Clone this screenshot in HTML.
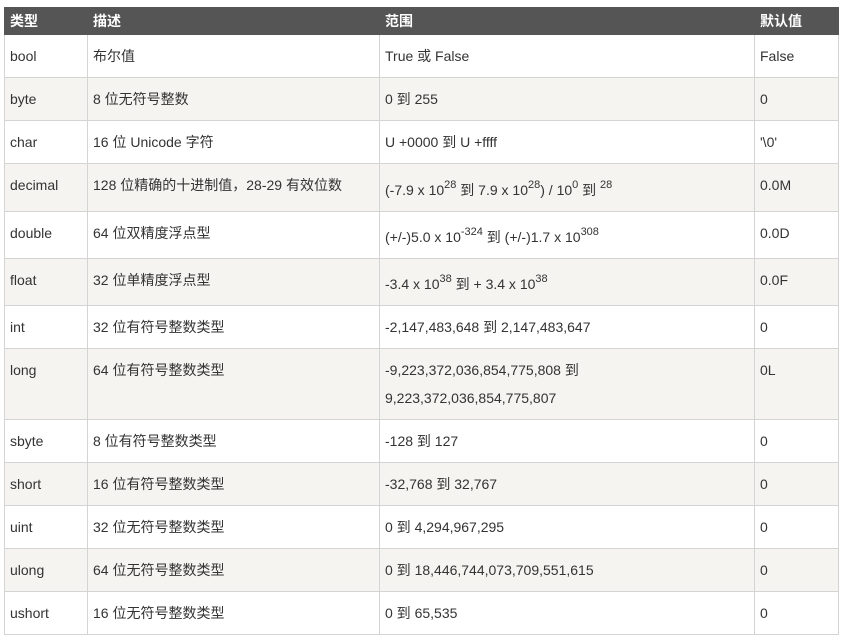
<!DOCTYPE html>
<html><head><meta charset="utf-8"><style>
body{margin:0;background:#fff;font-family:"Liberation Sans","Noto Sans CJK SC",sans-serif;font-size:14px;color:#333}
table{position:absolute;left:4px;top:7px;border-collapse:collapse;width:834px;table-layout:fixed}
th{background:#555;color:#fff;text-align:left;font-weight:bold;height:26px;padding:0 5px;line-height:26px;border:1px solid #555}
td{border:1px solid #d4d4d4;padding:7px 5px 0;vertical-align:top;line-height:28px}
tr:nth-child(odd) td{background:#f6f4f0}
sup{font-size:11px;line-height:0;vertical-align:7px}
</style></head><body>
<table>
<colgroup><col style="width:83px"><col style="width:292px"><col style="width:375px"><col style="width:84px"></colgroup>
<tr><th>类型</th><th>描述</th><th>范围</th><th>默认值</th></tr>
<tr style="height:43px"><td>bool</td><td>布尔值</td><td>True 或 False</td><td>False</td></tr>
<tr style="height:43px"><td>byte</td><td>8 位无符号整数</td><td>0 到 255</td><td>0</td></tr>
<tr style="height:43px"><td>char</td><td>16 位 Unicode 字符</td><td>U +0000 到 U +ffff</td><td>'\0'</td></tr>
<tr style="height:48px"><td>decimal</td><td>128 位精确的十进制值，28-29 有效位数</td><td style="padding-top:12px">(-7.9 x 10<sup>28</sup> 到 7.9 x 10<sup>28</sup>) / 10<sup>0</sup> 到 <sup>28</sup></td><td>0.0M</td></tr>
<tr style="height:47px"><td>double</td><td>64 位双精度浮点型</td><td style="padding-top:11px">(+/-)5.0 x 10<sup>-324</sup> 到 (+/-)1.7 x 10<sup>308</sup></td><td>0.0D</td></tr>
<tr style="height:47px"><td>float</td><td>32 位单精度浮点型</td><td style="padding-top:11px">-3.4 x 10<sup>38</sup> 到 + 3.4 x 10<sup>38</sup></td><td>0.0F</td></tr>
<tr style="height:43px"><td>int</td><td>32 位有符号整数类型</td><td>-2,147,483,648 到 2,147,483,647</td><td>0</td></tr>
<tr style="height:71px"><td>long</td><td>64 位有符号整数类型</td><td>-9,223,372,036,854,775,808 到<br>9,223,372,036,854,775,807</td><td>0L</td></tr>
<tr style="height:43px"><td>sbyte</td><td>8 位有符号整数类型</td><td>-128 到 127</td><td>0</td></tr>
<tr style="height:43px"><td>short</td><td>16 位有符号整数类型</td><td>-32,768 到 32,767</td><td>0</td></tr>
<tr style="height:43px"><td>uint</td><td>32 位无符号整数类型</td><td>0 到 4,294,967,295</td><td>0</td></tr>
<tr style="height:43px"><td>ulong</td><td>64 位无符号整数类型</td><td>0 到 18,446,744,073,709,551,615</td><td>0</td></tr>
<tr style="height:43px"><td>ushort</td><td>16 位无符号整数类型</td><td>0 到 65,535</td><td>0</td></tr>
</table>
</body></html>
